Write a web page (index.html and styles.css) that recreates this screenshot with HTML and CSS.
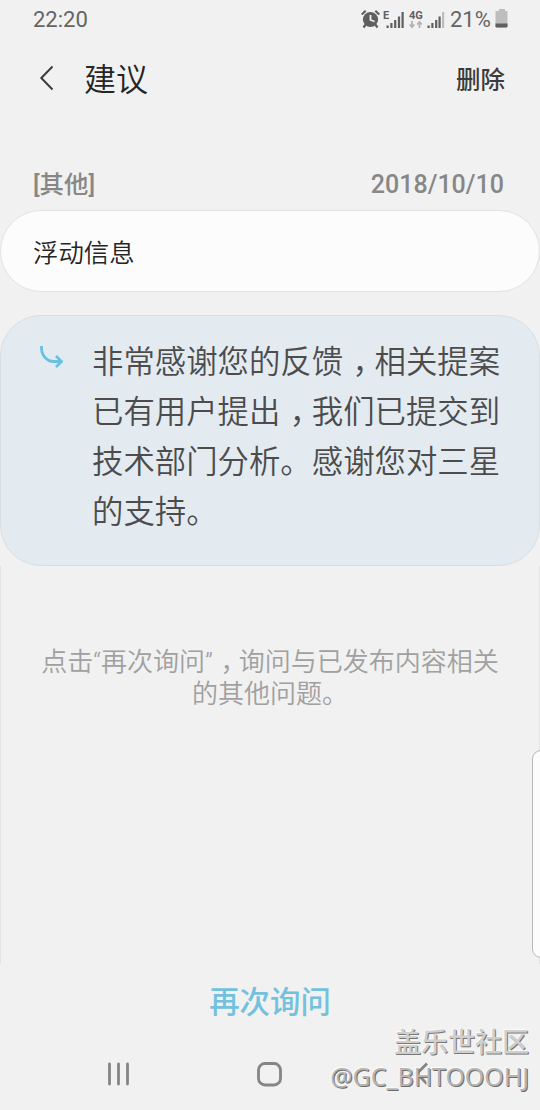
FILE: index.html
```html
<!DOCTYPE html>
<html lang="zh-CN">
<head>
<meta charset="utf-8">
<title>建议</title>
<link rel="stylesheet" href="styles.css">
</head>
<body>
<div class="screen">
  <header class="status">
    <span class="clock">22:20</span>
    <div class="status-right">
      <svg class="status-icons" width="96" height="24" viewBox="0 0 96 24">
        <g fill="#5f5f5f">
          <circle cx="9.500" cy="11.500" r="7.600"/>
          <path d="M5 16l-2.500 3.500M14 16l2.500 3.500M.7 6.500l4-3.700M14.300 2.800l4 3.700" stroke="#5f5f5f" stroke-width="2.200"/>
          <path d="M9.500 7v5l4 1.500" fill="none" stroke="#f1f1f1" stroke-width="1.800"/>
          <path d="M25.500 17.500h2.200v2.500h-2.200zM29.300 15h2.200v5h-2.200zM33.100 12h2.200v8h-2.200zM36.900 8.500h2.200v11.500h-2.200zM40.500 4h2.200v16h-2.200z"/>
          <path d="M66.500 17.500h2.200v2.500h-2.200zM70.300 15h2.200v5h-2.200zM74.100 12h2.200v8h-2.200zM77.500 8.500h2.200v11.500h-2.200z"/>
        </g>
        <path d="M81 4h2.200v16h-2.200z" fill="#bdbdbd"/>
        <path d="M51 13v6M48.700 16.500l2.300 2.600 2.300-2.600M58.500 20v-6M56.200 16.500l2.300-2.600 2.300 2.600" fill="none" stroke="#b3b3b3" stroke-width="1.800"/>
        <text class="network" x="22" y="10.500">E</text>
        <text class="network" x="48" y="10.500">4G</text>
      </svg>
      <span class="percent">21%</span>
      <svg class="battery" width="14" height="20" viewBox="0 0 14 20">
        <path d="M4 0h6v2h2.500v15.500l-1 1h-10l-1-1V2H4z" fill="#bdbdbd"/>
        <path d="M.5 14.500h12v3l-1 1h-10l-1-1z" fill="#5f5f5f"/>
      </svg>
    </div>
  </header>
  <div class="titlebar">
    <svg class="back" width="15" height="26" viewBox="0 0 15 26"><path d="M13.500 1.500L2.300 13l11.200 11.500" fill="none" stroke="#3c3c3c" stroke-width="2"/></svg>
    <h1 class="title">建议</h1>
    <span class="delete">删除</span>
  </div>
  <div class="meta"><span>[其他]</span><span class="date">2018/10/10</span></div>
  <section class="question">浮动信息</section>
  <section class="answer">
    <svg class="reply" width="24" height="24" viewBox="0 0 24 24"><path d="M2.500 0v2c0 8 6 13.500 12 13.500h7M17 10l5.500 5.500-5.500 5.500" fill="none" stroke="#68c1e1" stroke-width="2.800"/></svg>
    <p class="answer-text">非常感谢您的反馈<span class="comma">，</span>相关提案<br>已有用户提出<span class="comma">，</span>我们已提交到<br>技术部门分析。感谢您对三星<br>的支持。</p>
  </section>
  <main class="rest">
    <p class="hint">点击“再次询问”<span class="comma">，</span>询问与已发布内容相关<br>的其他问题。</p>
  </main>
  <div class="ask">再次询问</div>
  <nav class="nav">
    <svg width="540" height="52" viewBox="0 0 540 52" fill="none" stroke="#858585">
      <path d="M109.500 6v20M118.500 6v20M127.500 6v20" stroke-width="2.800" stroke-linecap="round"/>
      <rect x="258.500" y="5.500" width="22" height="21.500" rx="6.500" stroke-width="2.800"/>
      <path d="M427 5.500L417 15.500l10 10.500" stroke-width="2.800"/>
    </svg>
  </nav>
  <div class="edge-handle"></div>
  <div class="watermark"><div class="community">盖乐世社区</div><div class="handle">@GC_BHTOOOHJ</div></div>
</div>
</body>
</html>
```
FILE: styles.css
```css
* { box-sizing: border-box; }
body { margin: 0; background: #f1f1f1; font-family: Roboto, "Noto Sans CJK SC", sans-serif; }
h1, p { margin: 0; font-weight: 400; }
svg { display: block; flex: none; }
.screen { position: relative; width: 540px; height: 1110px; overflow: hidden; display: flex; flex-direction: column; white-space: nowrap; }
.status { height: 40px; padding: 0 31px 0 33px; display: flex; justify-content: space-between; align-items: center; color: #646464; font-size: 22px; line-height: 40px; }
.status-right { display: flex; align-items: center; }
.status-icons { margin-right: -7px; }
.percent { width: 41px; }
.battery { margin-left: 4px; margin-top: -2px; }
.network { font: 700 11px Roboto, sans-serif; fill: #5f5f5f; }
.titlebar { height: 80px; padding: 0 35px 0 39px; display: flex; align-items: center; color: #252525; }
.back { margin-top: -4px; }
.title { margin-left: 30px; font-size: 32px; line-height: 80px; font-weight: 350; }
.delete { margin-left: auto; margin-top: -4px; font-size: 24.500px; font-weight: 500; color: #3b3b3b; }
.meta { height: 90px; padding: 50px 36px 0 33px; display: flex; justify-content: space-between; font-size: 24.400px; line-height: 30px; font-weight: 500; color: #878787; }
.date { font-size: 25px; }
.question { height: 82px; padding: 2px 32px 0; border: 1px solid #e2e2e2; border-radius: 41px; background: #fcfcfc; color: #252525; font-size: 25.400px; line-height: 81px; font-weight: 350; }
.answer { height: 251px; margin-top: 23px; padding: 22px 38px 0 38px; display: flex; border: 1px solid #d8dfe2; border-radius: 41px; background: #e3ebf1; color: #4c4c4c; }
.reply { margin-top: 8px; margin-right: 29px; }
.answer-text { font-size: 31.400px; line-height: 50px; font-weight: 350; }
.comma { display: inline-block; padding-left: .3em; padding-right: .2em; font-feature-settings: "halt"; }
.rest { height: 398px; padding-top: 80px; border: solid #e4e4e4; border-width: 0 1px; text-align: center; }
.hint { color: #a0a0a0; font-size: 26px; line-height: 32px; font-weight: 350; }
.ask { height: 94px; padding-top: 17px; text-align: center; color: #72c1dd; font-size: 30.400px; line-height: 44px; font-weight: 500; }
.nav { height: 52px; }
.edge-handle { position: absolute; left: 532px; top: 750px; width: 20px; height: 208px; border: 1px solid #b8b8b8; border-radius: 9px; background: #fcfcfc; }
.watermark { position: absolute; right: 11px; top: 1025px; text-align: right; color: #cfcfcf; text-shadow: 1px 1px 0 #777, -1px -1px 1px #fffaf2; }
.community { font-size: 27px; line-height: 36px; font-weight: 500; }
.handle { font-family: "Noto Sans", sans-serif; font-size: 24.900px; line-height: 31px; color: #b5b5b5; text-shadow: 1px 1px 0 #6c6c6c, -1px -1px 1px #fffaf2; }
```
